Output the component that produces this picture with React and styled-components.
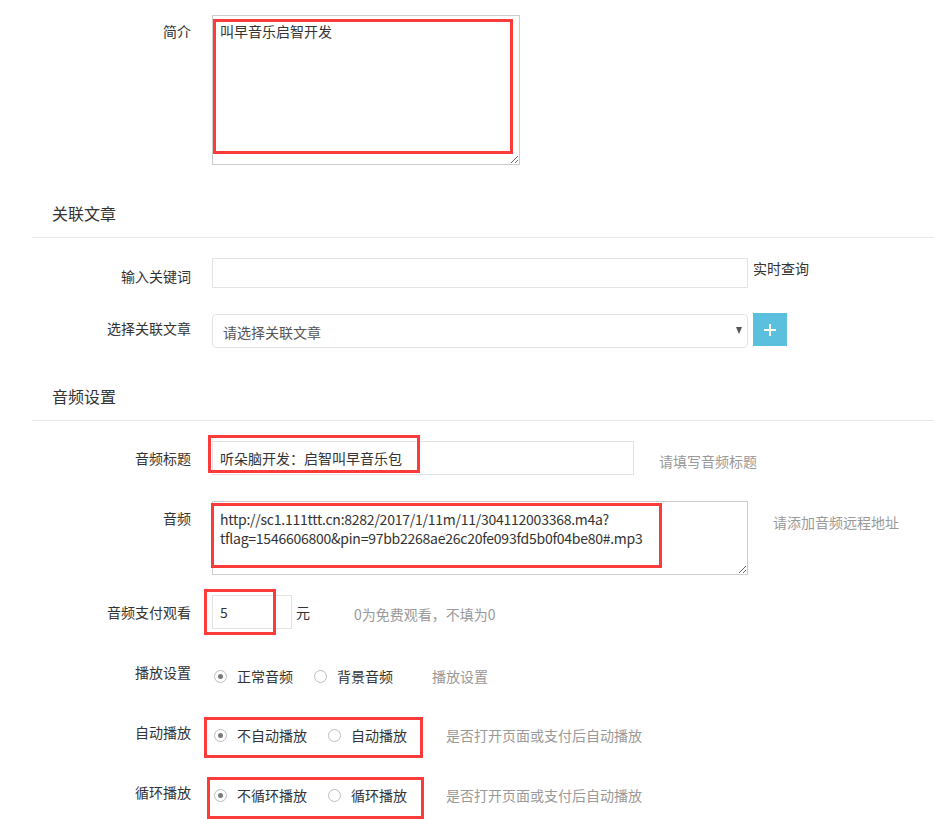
import React from 'react'
import styled, { createGlobalStyle } from 'styled-components'

const GlobalStyle = createGlobalStyle`
    body {
        margin: 0;
        background: #fff;
        font-family: "Noto Sans CJK SC", "Microsoft YaHei", sans-serif;
        font-size: 14px;
        color: #333;
    }
`;

const Page = styled.div`
    width: 934px;
    padding: 15px 0 20px 32px;
    box-sizing: border-box;
`;

const Row = styled.div`
    display: flex;
    align-items: flex-start;
    margin-top: ${p => p.$mt || 0}px;
`;

const Label = styled.div`
    width: 159px;
    margin-right: 21px;
    flex-shrink: 0;
    text-align: right;
    line-height: 20px;
    padding-top: ${p => p.$pt ?? 8}px;
    color: #333;
`;

const SectionTitle = styled.div`
    margin-top: 37px;
    padding: 0 0 13px 20px;
    font-size: 16px;
    line-height: 22px;
    color: #333;
    border-bottom: 1px solid #e8e8e8;
`;

const Field = styled.div`
    position: relative;
    flex-shrink: 0;
`;

const Mark = styled.span`
    position: absolute;
    top: ${p => p.$t}px;
    left: ${p => p.$l}px;
    width: ${p => p.$w}px;
    height: ${p => p.$h}px;
    border: 3px solid #fc3b3b;
    box-sizing: border-box;
    pointer-events: none;
`;

const TextArea = styled.textarea`
    display: block;
    width: ${p => p.$w}px;
    height: ${p => p.$h}px;
    box-sizing: border-box;
    margin: 0;
    padding: ${p => p.$pt ?? 8}px 7px 6px;
    border: 1px solid #cccccc;
    font-family: inherit;
    font-size: 14px;
    line-height: 19px;
    letter-spacing: ${p => p.$ls || 0}px;
    color: #333;
    outline: none;
`;

const Input = styled.input`
    display: block;
    width: ${p => p.$w}px;
    height: ${p => p.$h || 34}px;
    box-sizing: border-box;
    margin: 0;
    padding: 0 7px;
    border: 1px solid #e3e3e3;
    font-family: inherit;
    font-size: 14px;
    color: #333;
    outline: none;
`;

const SelectBox = styled.div`
    width: 536px;
    height: 34px;
    box-sizing: border-box;
    padding: 2px 5px 0 10px;
    border: 1px solid #e3e3e3;
    border-radius: 4px;
    display: flex;
    align-items: center;
    justify-content: space-between;
    color: #555;
`;

const Caret = styled.span`
    width: 0;
    height: 0;
    border-left: 3px solid transparent;
    border-right: 3px solid transparent;
    border-top: 7px solid #555;
    margin-top: -3px;
`;

const AddButton = styled.button`
    width: 34px;
    height: 33px;
    margin: -1px 0 0 5px;
    padding: 0;
    border: none;
    background: #5bc0de;
    display: flex;
    align-items: center;
    justify-content: center;
    cursor: pointer;
`;

const Inline = styled.span`
    line-height: 20px;
    padding-top: ${p => p.$pt || 0}px;
    margin-left: ${p => p.$ml || 0}px;
    color: ${p => (p.$muted ? '#999' : '#333')};
    white-space: nowrap;
`;

const Centered = styled.div`
    display: flex;
    align-items: center;
    height: 34px;
`;

const RadioGroup = styled.div`
    position: relative;
    display: flex;
    align-items: center;
    gap: 21px;
    height: 34px;
    padding-left: 2px;
`;

const Option = styled.label`
    display: flex;
    align-items: center;
    color: #333;
    line-height: 20px;
    cursor: pointer;
`;

const Circle = styled.span`
    width: 13px;
    height: 13px;
    box-sizing: border-box;
    border: 1px solid #bdbdbd;
    border-radius: 50%;
    margin-right: 10px;
    display: flex;
    align-items: center;
    justify-content: center;

    &::after {
        content: '';
        width: 5px;
        height: 5px;
        border-radius: 50%;
        background: ${p => (p.$on ? '#7a7a7a' : 'transparent')};
    }
`;

const Radios = ({ options, mark, help }) => (
    <Centered>
        <RadioGroup>
            {options.map((o, i) => (
                <Option key={o}>
                    <Circle $on={i === 0} />
                    {o}
                </Option>
            ))}
            {mark && <Mark $t={mark[0]} $l={mark[1]} $w={mark[2]} $h={mark[3]} />}
        </RadioGroup>
        <Inline $muted $ml={39}>{help}</Inline>
    </Centered>
);

const audioUrl = 'http://sc1.111ttt.cn:8282/2017/1/11m/11/304112003368.m4a?tflag=1546606800&pin=97bb2268ae26c20fe093fd5b0f04be80#.mp3';

export default function App() {
    return (
        <Page>
            <GlobalStyle />
            <Row>
                <Label $pt={6}>简介</Label>
                <Field>
                    <TextArea $w={308} $h={150} $pt={6} defaultValue="叫早音乐启智开发" />
                    <Mark $t={4} $l={1} $w={300} $h={135} />
                </Field>
            </Row>

            <SectionTitle>关联文章</SectionTitle>
            <Row $mt={20}>
                <Label $pt={8}>输入关键词</Label>
                <Input $w={536} $h={30} />
                <Inline $ml={5} $pt={0}>实时查询</Inline>
            </Row>
            <Row $mt={26}>
                <Label $pt={4}>选择关联文章</Label>
                <SelectBox>
                    请选择关联文章
                    <Caret />
                </SelectBox>
                <AddButton>
                    <svg width="12" height="12" viewBox="0 0 12 12">
                        <path d="M6 0v12M0 6h12" stroke="#fff" strokeWidth="2" />
                    </svg>
                </AddButton>
            </Row>

            <SectionTitle>音频设置</SectionTitle>
            <Row $mt={20}>
                <Label $pt={7}>音频标题</Label>
                <Field>
                    <Input $w={422} defaultValue="听朵脑开发：启智叫早音乐包" />
                    <Mark $t={-6} $l={-4} $w={212} $h={38} />
                </Field>
                <Inline $muted $ml={25} $pt={10}>请填写音频标题</Inline>
            </Row>
            <Row $mt={26}>
                <Label $pt={7}>音频</Label>
                <Field>
                    <TextArea $w={536} $h={74} $ls={-0.25} defaultValue={audioUrl} />
                    <Mark $t={2} $l={-1} $w={451} $h={65} />
                </Field>
                <Inline $muted $ml={25} $pt={11}>请添加音频远程地址</Inline>
            </Row>
            <Row $mt={20}>
                <Label $pt={7}>音频支付观看</Label>
                <Centered>
                    <Field>
                        <Input $w={80} defaultValue="5" />
                        <Mark $t={-6} $l={-8} $w={72} $h={46} />
                    </Field>
                    <Inline $ml={4}>元</Inline>
                    <Inline $muted $ml={44} $pt={3}>0为免费观看，不填为0</Inline>
                </Centered>
            </Row>
            <Row $mt={30}>
                <Label $pt={3}>播放设置</Label>
                <Radios options={['正常音频', '背景音频']} help="播放设置" />
            </Row>
            <Row $mt={25}>
                <Label $pt={4}>自动播放</Label>
                <Radios
                    options={['不自动播放', '自动播放']}
                    mark={[-1, -8, 219, 41]}
                    help="是否打开页面或支付后自动播放"
                />
            </Row>
            <Row $mt={26}>
                <Label $pt={4}>循环播放</Label>
                <Radios
                    options={['不循环播放', '循环播放']}
                    mark={[-1, -5, 217, 42]}
                    help="是否打开页面或支付后自动播放"
                />
            </Row>
        </Page>
    )
}
